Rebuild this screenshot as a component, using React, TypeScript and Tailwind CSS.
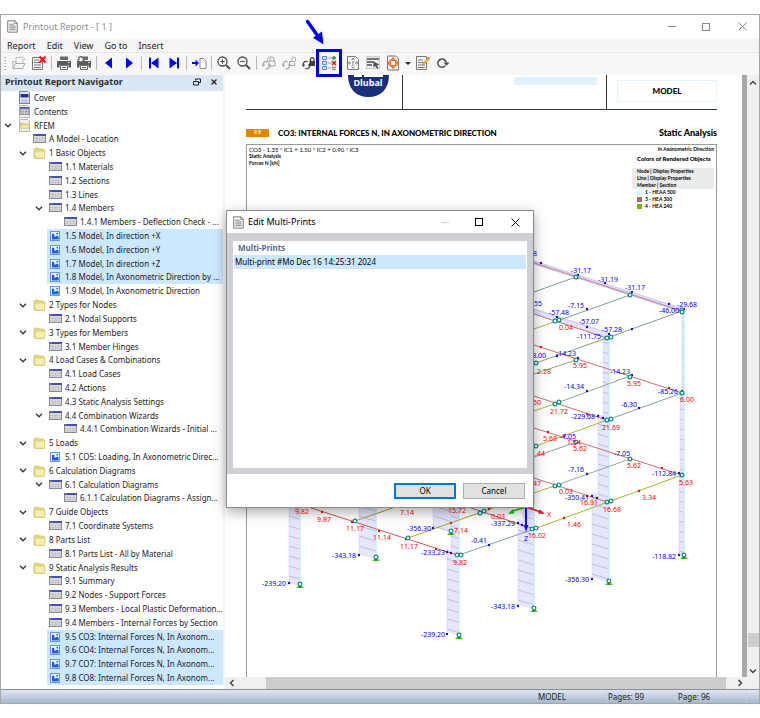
import type { ReactNode } from "react"

type IconKind = "cover" | "contents" | "root" | "folder" | "table" | "picture"

type TreeItem = {
  label: string
  depth: 0 | 1 | 2 | 3
  icon: IconKind
  open?: boolean
  selected?: boolean
}

const tree: TreeItem[] = [
  { label: "Cover", depth: 0, icon: "cover" },
  { label: "Contents", depth: 0, icon: "contents" },
  { label: "RFEM", depth: 0, icon: "root", open: true },
  { label: "A Model - Location", depth: 1, icon: "table" },
  { label: "1 Basic Objects", depth: 1, icon: "folder", open: true },
  { label: "1.1 Materials", depth: 2, icon: "table" },
  { label: "1.2 Sections", depth: 2, icon: "table" },
  { label: "1.3 Lines", depth: 2, icon: "table" },
  { label: "1.4 Members", depth: 2, icon: "table", open: true },
  { label: "1.4.1 Members - Deflection Check - ...", depth: 3, icon: "table" },
  { label: "1.5 Model, In direction +X", depth: 2, icon: "picture", selected: true },
  { label: "1.6 Model, In direction +Y", depth: 2, icon: "picture", selected: true },
  { label: "1.7 Model, In direction +Z", depth: 2, icon: "picture", selected: true },
  { label: "1.8 Model, In Axonometric Direction by ...", depth: 2, icon: "picture", selected: true },
  { label: "1.9 Model, In Axonometric Direction", depth: 2, icon: "picture" },
  { label: "2 Types for Nodes", depth: 1, icon: "folder", open: true },
  { label: "2.1 Nodal Supports", depth: 2, icon: "table" },
  { label: "3 Types for Members", depth: 1, icon: "folder", open: true },
  { label: "3.1 Member Hinges", depth: 2, icon: "table" },
  { label: "4 Load Cases & Combinations", depth: 1, icon: "folder", open: true },
  { label: "4.1 Load Cases", depth: 2, icon: "table" },
  { label: "4.2 Actions", depth: 2, icon: "table" },
  { label: "4.3 Static Analysis Settings", depth: 2, icon: "table" },
  { label: "4.4 Combination Wizards", depth: 2, icon: "table", open: true },
  { label: "4.4.1 Combination Wizards - Initial ...", depth: 3, icon: "table" },
  { label: "5 Loads", depth: 1, icon: "folder", open: true },
  { label: "5.1 CO5: Loading, In Axonometric Direc...", depth: 2, icon: "picture" },
  { label: "6 Calculation Diagrams", depth: 1, icon: "folder", open: true },
  { label: "6.1 Calculation Diagrams", depth: 2, icon: "table", open: true },
  { label: "6.1.1 Calculation Diagrams - Assign...", depth: 3, icon: "table" },
  { label: "7 Guide Objects", depth: 1, icon: "folder", open: true },
  { label: "7.1 Coordinate Systems", depth: 2, icon: "table" },
  { label: "8 Parts List", depth: 1, icon: "folder", open: true },
  { label: "8.1 Parts List - All by Material", depth: 2, icon: "table" },
  { label: "9 Static Analysis Results", depth: 1, icon: "folder", open: true },
  { label: "9.1 Summary", depth: 2, icon: "table" },
  { label: "9.2 Nodes - Support Forces", depth: 2, icon: "table" },
  { label: "9.3 Members - Local Plastic Deformation...", depth: 2, icon: "table" },
  { label: "9.4 Members - Internal Forces by Section", depth: 2, icon: "table" },
  { label: "9.5 CO3: Internal Forces N, In Axonom...", depth: 2, icon: "picture", selected: true },
  { label: "9.6 CO4: Internal Forces N, In Axonom...", depth: 2, icon: "picture", selected: true },
  { label: "9.7 CO7: Internal Forces N, In Axonom...", depth: 2, icon: "picture", selected: true },
  { label: "9.8 CO8: Internal Forces N, In Axonom...", depth: 2, icon: "picture", selected: true },
]

const indent = ["pl-[1px]", "pl-4", "pl-8", "pl-[47px]"]

const TreeIcon = ({ kind }: { kind: IconKind }) => {
  if (kind === "table") {
    return (
      <svg className="h-[12px] w-[13px] shrink-0" viewBox="0 0 13 12">
        <rect x="0.5" y="1.5" width="12" height="8" fill="#dadada" stroke="#8a8a8a" />
        <path d="M1 5.500h11M1 7.500h11M3.500 4v5M6.500 4v5M9.500 4v5" stroke="#c2c2c2" strokeWidth="0.700" />
        <rect x="0" y="1" width="13" height="2" fill="#4450b8" />
        <rect x="0" y="1" width="3" height="2" fill="#666a80" />
      </svg>
    )
  }
  if (kind === "folder") {
    return (
      <svg className="h-[12px] w-[13px] shrink-0" viewBox="0 0 13 12">
        <path d="M1 10.500V2l1-1h3.500l1 1h4l.5 1 1 .5-.6 8H1.500z" fill="#e3d57c" stroke="#d3c673" strokeWidth="0.800" />
        <path d="M2.200 4.200h9.300v6.800H2.200z" fill="#f7eeb0" stroke="#dccf80" strokeWidth="0.600" />
      </svg>
    )
  }
  if (kind === "picture") {
    return (
      <svg className="h-[12px] w-[13px] shrink-0" viewBox="0 0 13 12">
        <rect x="1.500" y="1.500" width="9" height="9" fill="#f3f8ff" stroke="#5f95ea" />
        <path d="M3 9.500V3.800h2.300v2.600h1.500l1.200-1 1.700 1.400v2.700z" fill="#1f5fd6" />
        <circle cx="8.300" cy="3.700" r="0.900" fill="#1f5fd6" />
      </svg>
    )
  }
  return (
    <svg className="h-[13px] w-[13px] shrink-0" viewBox="0 0 13 13">
      <path d="M1.500.5h8.500l1.500 1.500v10.500h-10z" fill="#f0f0f0" stroke="#b5b5b5" />
      {kind === "cover" && (
        <>
          <path d="M1.500.5h8.500l1.500 1.500v10.500h-10z" fill="#e8ecf6" stroke="#7b8190" />
          <rect x="2.500" y="3" width="8" height="3.500" fill="#23349a" />
          <path d="M3 9h7M3 11h7" stroke="#8d94a6" strokeWidth="0.800" />
        </>
      )}
      {kind === "contents" && (
        <>
          <rect x="2" y="2.500" width="9" height="7" fill="#c9c9c9" stroke="#777777" strokeWidth="0.700" />
          <rect x="2" y="2" width="9" height="1.800" fill="#4a55a5" />
          <path d="M2 6.500h9M5 4v5M8 4v5" stroke="#999999" strokeWidth="0.500" />
        </>
      )}
      {kind === "root" && (
        <>
          <path d="M2.500 9V4h3l1 1h4.500v4z" fill="#e3d57c" stroke="#c9ba63" strokeWidth="0.600" />
          <path d="M2 9l1.500-3.200h8.300L10.800 9z" fill="#f7eeb0" stroke="#c9ba63" strokeWidth="0.600" />
        </>
      )}
    </svg>
  )
}

const TreeRow = ({ item }: { item: TreeItem }) => {
  return (
    <li role="treeitem" aria-selected={!!item.selected} className={`flex flex-1 items-stretch ${indent[item.depth]}`}>
      <span className="mr-0.5 flex w-3 shrink-0 items-center justify-center">
        {item.open && (
          <svg className="h-[5px] w-[8px]" viewBox="0 0 8 5">
            <path d="M1 .8l3 3 3-3" fill="none" stroke="#333333" strokeWidth="1.300" />
          </svg>
        )}
      </span>
      <span className={`flex min-w-0 flex-1 items-center gap-[3px] pl-0.5 ${item.selected ? "bg-[#cce8ff]" : ""}`}>
        <TreeIcon kind={item.icon} />
        <span className="whitespace-nowrap leading-[12px]">{item.label}</span>
      </span>
    </li>
  )
}

const PageIcon = ({ className }: { className: string }) => (
  <svg className={className} viewBox="0 0 12 14">
    <path d="M.8.8h7.700l2.700 2.700v9.700H.8z" fill="#fafafa" stroke="#6f6f6f" />
    <path d="M8.300.8v2.900h2.900" fill="none" stroke="#6f6f6f" strokeWidth="0.800" />
    <path d="M2.500 4.500h5M2.500 6.500h7M2.500 8.500h7M2.500 10.500h7" stroke="#6f6f6f" strokeWidth="0.900" />
  </svg>
)

const ToolButton = ({ label, children }: { label: string; children: ReactNode }) => (
  <button type="button" aria-label={label} className="flex h-5 w-5 shrink-0 items-center justify-center">
    <svg className="h-4 w-4" viewBox="0 0 16 16" fill="none">
      {children}
    </svg>
  </button>
)

const Divider = () => <span className="mx-0.5 h-3.5 w-px shrink-0 bg-[#b9b9b9]" />

const Printer = () => (
  <>
    <path d="M4 1.500h8V5H4z" fill="#6a6a6a" />
    <path d="M1 6h14v6.500h-2.500V10h-9v2.500H1z" fill="#5c5c5c" />
    <path d="M4.500 10.500h7v4h-7z" fill="#ffffff" stroke="#6a6a6a" />
    <path d="M6 12.500h4" stroke="#5c5c5c" />
    <path d="M12 7.500h1.500" stroke="#eeeeee" />
  </>
)

const Links = ({ color }: { color: string }) => (
  <>
    <path d="M6.500 6.800a3 3 0 0 0-4 4.200M4.500 13.500a3 3 0 0 0 4-4" stroke={color} strokeWidth="1.300" />
    <path d="M.8 9.800l1.900 2.200 1.400-2.500zM10 10.500L8.300 8.300l-1.500 2.500z" fill={color} />
  </>
)

const Toolbar = () => (
  <div role="toolbar" className="flex h-[22px] items-center bg-[#f7f7f7] pb-0.5 pl-[3px]">
    <span className="mr-0.5 flex w-[3px] flex-col gap-[2px]">
      <i className="h-px w-0.5 bg-[#b5b5b5]" />
      <i className="h-px w-0.5 bg-[#b5b5b5]" />
      <i className="h-px w-0.5 bg-[#b5b5b5]" />
      <i className="h-px w-0.5 bg-[#b5b5b5]" />
      <i className="h-px w-0.5 bg-[#b5b5b5]" />
    </span>
    <ToolButton label="Open">
      <path d="M5 7.500V2.500h5l2 2v4" fill="#f7f7f7" stroke="#c0c0c0" />
      <path d="M1.800 13V6.500h2.700l1 1.500" stroke="#b0b0b0" />
      <path d="M2 13.500l2.500-5h9.500l-2.500 5z" fill="#f2f2f2" stroke="#a8a8a8" />
      <path d="M9 2.500c2-1.500 4.500-.5 4.500 2.500" stroke="#c0c0c0" />
    </ToolButton>
    <ToolButton label="Delete report">
      <path d="M1.500 2.500h10v12h-10z" fill="#f5f5f5" stroke="#777777" />
      <path d="M3 5h5M3 7.500h7M3 10h7M3 12.500h7" stroke="#777777" />
      <path d="M8.500 1.500l6 6M14.500 1.500l-6 6" stroke="#ee1111" strokeWidth="2" />
    </ToolButton>
    <Divider />
    <ToolButton label="Print">
      <Printer />
    </ToolButton>
    <ToolButton label="Print settings">
      <Printer />
      <circle cx="5" cy="4.500" r="2.600" fill="#f7f7f7" stroke="#5c5c5c" strokeWidth="1.800" strokeDasharray="1.700 0.600" />
    </ToolButton>
    <Divider />
    <ToolButton label="Previous page">
      <path d="M11 2.500v11L4 8z" fill="#0000ff" />
    </ToolButton>
    <ToolButton label="Next page">
      <path d="M5 2.500v11L12 8z" fill="#0000ff" />
    </ToolButton>
    <Divider />
    <ToolButton label="First page">
      <path d="M3 2.500h2v11H3zM12.500 2.500v11L5 8z" fill="#0000ff" />
    </ToolButton>
    <ToolButton label="Last page">
      <path d="M3.500 2.500v11L11 8zM11 2.500h2v11h-2z" fill="#0000ff" />
    </ToolButton>
    <Divider />
    <ToolButton label="Go to page">
      <path d="M1 7h3.500V4.500L8 8l-3.500 3.500V9H1z" fill="#0000ff" />
      <path d="M9 3.500h3.500l2.500 2.500v7.500H9z" fill="#ffffff" stroke="#8a8a8a" />
    </ToolButton>
    <Divider />
    <ToolButton label="Zoom in">
      <circle cx="6.500" cy="6.500" r="4.500" stroke="#4d4d4d" strokeWidth="1.300" />
      <path d="M4.300 6.500h4.400M6.500 4.300v4.400" stroke="#4d4d4d" strokeWidth="1.100" />
      <path d="M10 10l4 4" stroke="#4d4d4d" strokeWidth="2" />
    </ToolButton>
    <ToolButton label="Zoom out">
      <circle cx="6.500" cy="6.500" r="4.500" stroke="#4d4d4d" strokeWidth="1.300" />
      <path d="M4.300 6.500h4.400" stroke="#4d4d4d" strokeWidth="1.100" />
      <path d="M10 10l4 4" stroke="#4d4d4d" strokeWidth="2" />
    </ToolButton>
    <Divider />
    <ToolButton label="Lock page">
      <Links color="#a2a2a2" />
      <path d="M8 6h6v5H8zM9 6V4a2 2 0 0 1 4 0v2" stroke="#a2a2a2" />
      <path d="M6.500 7V4a3 3 0 0 1 3-2.500" stroke="#b5b5b5" />
    </ToolButton>
    <ToolButton label="Unlock page">
      <Links color="#a2a2a2" />
      <path d="M8.500 6.500h5v4h-5zM11 6V4a1.800 1.800 0 0 1 3.600 0v2" stroke="#a2a2a2" />
    </ToolButton>
    <ToolButton label="Update and lock">
      <Links color="#3d3d3d" />
      <path d="M8.500 6h5.500v5H8.500z" fill="#3d3d3d" />
      <path d="M9.500 6V4a1.800 1.800 0 0 1 3.500 0v2" stroke="#3d3d3d" strokeWidth="1.200" />
    </ToolButton>
    <div className="relative mr-1">
      <ToolButton label="Edit multi-prints">
        <path d="M1.500 1.500h4v3h-4zM1.500 6.500h4v3h-4zM1.500 11.500h4v3h-4z" fill="#d5e5ff" stroke="#4c86e4" />
        <path d="M7 3h4M7 8h4M7 13h4" stroke="#a2a2a2" />
        <path d="M13 1v4M11 3h4" stroke="#189a45" strokeWidth="1.400" />
        <path d="M11 6l4 4M15 6l-4 4" stroke="#ee1111" strokeWidth="1.500" />
        <path d="M11 12.300h4M11 14.300h4" stroke="#777777" />
      </ToolButton>
      <span className="absolute -inset-x-[3px] -inset-y-1 border-[3px] border-[#0000e6]" />
      <svg className="absolute -top-[34px] -left-[14px] h-[27px] w-5" viewBox="0 0 20 27">
        <path d="M2.500 2.500l10 14" stroke="#0000ee" strokeWidth="3.500" strokeLinecap="round" />
        <path d="M18.500 25.500L8 18.800l9-6.300z" fill="#0000ee" />
      </svg>
    </div>
    <ToolButton label="Page setup">
      <path d="M2.500 1.500h8l3 3v10h-11z" fill="#fcfcfc" stroke="#777777" />
      <path d="M8 3v10M4 8h8" stroke="#888888" strokeDasharray="2 1" />
      <path d="M6.500 4.500L8 3l1.500 1.500M6.500 11.500L8 13l1.500-1.500M4.500 6.500L3.500 8l1 1.500M11.500 6.500l1 1.500-1 1.500" stroke="#777777" />
    </ToolButton>
    <ToolButton label="Selection">
      <path d="M1.500 1.500h13v12h-13z" fill="#eeeeee" stroke="#c7c7c7" />
      <path d="M2 4h12M2 7h7M2 10h5" stroke="#4d4d4d" strokeWidth="1.700" />
      <path d="M8.500 6.500l6 3-2.500.8 1.500 2.800-1.500.7-1.500-2.800-2 1.800z" fill="#4d4d4d" />
    </ToolButton>
    <ToolButton label="Zoom to page">
      <path d="M2.500 1h8l3 2.500V15h-11z" fill="#f2f2f2" stroke="#777777" />
      <path d="M8 2l2.500 2.500h-5zM8 14l2.500-2.500h-5zM2 8l2.500-2.500v5zM14 8l-2.500-2.500v5z" fill="#f06a1d" />
      <rect x="5.200" y="5.300" width="5.600" height="5.400" fill="#ffffff" stroke="#f06a1d" strokeWidth="1.400" />
    </ToolButton>
    <button type="button" aria-label="Zoom options" className="flex h-5 w-[9px] items-center justify-center">
      <svg className="h-[3px] w-[6px]" viewBox="0 0 6 3">
        <path d="M0 0h6L3 3z" fill="#222222" />
      </svg>
    </button>
    <ToolButton label="Edit text">
      <path d="M2.500 1.500h10v13h-10z" fill="#f8f8f8" stroke="#777777" />
      <path d="M4 5h5M4 7.500h6M4 10h7M4 12.500h7" stroke="#777777" />
      <path d="M9 8l5-5.500 1.500 1.300-5 5.700-2 .6z" fill="#f0b93a" stroke="#c98a18" strokeWidth="0.600" />
      <path d="M13.500 3l1-1.200 1.500 1.300-1 1.200z" fill="#e06a5a" />
    </ToolButton>
    <ToolButton label="Refresh">
      <path d="M11.300 10.800a4.200 4.200 0 1 1 .9-3.300" stroke="#4d4d4d" strokeWidth="1.500" />
      <path d="M9.500 7.500h6l-3 3.300z" fill="#4d4d4d" />
    </ToolButton>
  </div>
)

type Point = [number, number]

type Column = { left: number; right: number; top: number; bottom: number }

const columns: Column[] = [
  { left: 682, right: 684, top: 311, bottom: 393 },
  { left: 680, right: 684, top: 393, bottom: 475 },
  { left: 679, right: 684, top: 475, bottom: 556 },
  { left: 603, right: 609, top: 336, bottom: 420 },
  { left: 598, right: 609, top: 418, bottom: 502 },
  { left: 592, right: 609, top: 498, bottom: 582 },
  { left: 523, right: 534, top: 440, bottom: 529 },
  { left: 518, right: 534, top: 524, bottom: 609 },
  { left: 451, right: 459, top: 480, bottom: 555 },
  { left: 447, right: 459, top: 553, bottom: 635 },
  { left: 433, right: 451, top: 470, bottom: 532 },
  { left: 359, right: 376, top: 470, bottom: 559 },
  { left: 289, right: 300, top: 470, bottom: 586 },
]

const members: { from: Point; to: Point; color: string }[] = [
  { from: [534, 263], to: [682, 311], color: "#c87f8f" },
  { from: [534, 314], to: [607, 338], color: "#c87f8f" },
  { from: [534, 292], to: [576, 277], color: "#7f9f8f" },
  { from: [534, 329], to: [557, 321], color: "#9fb83c" },
  { from: [557, 321], to: [630, 295], color: "#7f9f8f" },
  { from: [536, 363], to: [607, 338], color: "#7f9f7f" },
  { from: [607, 338], to: [682, 311], color: "#7f9f8f" },
  { from: [534, 374], to: [576, 360], color: "#98a870" },
  { from: [534, 345], to: [682, 393], color: "#c87070" },
  { from: [534, 396], to: [607, 420], color: "#c87070" },
  { from: [534, 411], to: [557, 403], color: "#9fb83c" },
  { from: [557, 403], to: [630, 376], color: "#8fa88f" },
  { from: [536, 446], to: [607, 420], color: "#9fb83c" },
  { from: [607, 420], to: [682, 393], color: "#7f9f9f" },
  { from: [534, 457], to: [576, 442], color: "#7f9f9f" },
  { from: [534, 428], to: [682, 475], color: "#c87070" },
  { from: [534, 478], to: [607, 502], color: "#c87070" },
  { from: [534, 493], to: [557, 485], color: "#9fb83c" },
  { from: [557, 485], to: [630, 459], color: "#8fa8a0" },
  { from: [459, 555], to: [534, 529], color: "#7f9f9f" },
  { from: [534, 529], to: [682, 475], color: "#a3b52a" },
  { from: [302, 505], to: [457, 555], color: "#c85c5c" },
  { from: [355, 521], to: [404, 504], color: "#a3a52a" },
  { from: [408, 538], to: [504, 504], color: "#a3a52a" },
  { from: [462, 505], to: [534, 529], color: "#c85c5c" },
]

const nodes: Point[] = [
  [576, 277], [630, 295], [682, 310], [682, 312], [555, 321], [559, 320], [607, 338], [611, 337],
  [536, 363], [576, 360], [630, 377], [682, 393], [555, 404], [559, 402], [607, 420], [611, 419],
  [536, 446], [576, 442], [630, 459], [682, 475], [555, 486], [559, 485], [607, 502], [611, 501],
  [532, 529], [536, 528], [480, 513], [484, 511], [355, 521], [408, 538], [457, 555], [461, 555],
]

const supports: Point[] = [
  [300, 584], [376, 557], [451, 531], [459, 635], [534, 608], [609, 581], [684, 555],
]

const blueDots: Point[] = [
  [541, 263], [578, 275], [605, 283], [632, 292], [669, 304], [684, 309], [587, 309], [557, 317],
  [587, 327], [609, 334], [632, 329], [557, 356], [578, 358], [632, 375], [587, 391], [682, 391],
  [639, 408], [598, 416], [603, 418], [587, 474], [592, 496], [597, 498], [489, 545], [518, 523],
  [522, 525], [592, 579], [518, 606], [447, 634], [289, 583], [359, 555], [433, 528], [447, 552],
  [451, 553], [679, 555], [679, 473],
]

const redDots: Point[] = [
  [541, 347], [669, 388], [587, 414], [548, 432], [564, 436], [662, 468], [587, 496], [639, 491],
  [564, 518], [322, 512], [352, 522], [379, 531], [406, 539], [436, 549], [451, 523], [489, 509],
]

type Value = { x: number; y: number; text: string }

const blueValues: Value[] = [
  { x: 527, y: 253, text: "-31.68" },
  { x: 581, y: 270, text: "-31.17" },
  { x: 608, y: 279, text: "-31.19" },
  { x: 635, y: 287, text: "-31.17" },
  { x: 687, y: 304, text: "-29.68" },
  { x: 669, y: 310, text: "-46.00" },
  { x: 532, y: 303, text: "-57.55" },
  { x: 576, y: 305, text: "-7.15" },
  { x: 559, y: 312, text: "-57.48" },
  { x: 589, y: 321, text: "-57.07" },
  { x: 612, y: 329, text: "-57.28" },
  { x: 589, y: 336, text: "-111.75" },
  { x: 538, y: 355, text: "-8.00" },
  { x: 566, y: 353, text: "-14.23" },
  { x: 620, y: 371, text: "-14.23" },
  { x: 574, y: 386, text: "-14.34" },
  { x: 668, y: 391, text: "-85.26" },
  { x: 629, y: 404, text: "-6.30" },
  { x: 583, y: 416, text: "-229.68" },
  { x: 568, y: 436, text: "-7.05" },
  { x: 622, y: 453, text: "-7.05" },
  { x: 576, y: 469, text: "-7.16" },
  { x: 664, y: 473, text: "-112.84" },
  { x: 577, y: 497, text: "-350.41" },
  { x: 664, y: 556, text: "-118.82" },
  { x: 577, y: 579, text: "-356.30" },
  { x: 503, y: 523, text: "-337.29" },
  { x: 479, y: 540, text: "-0.41" },
  { x: 503, y: 606, text: "-343.18" },
  { x: 419, y: 528, text: "-356.30" },
  { x: 433, y: 552, text: "-233.23" },
  { x: 344, y: 555, text: "-343.18" },
  { x: 274, y: 583, text: "-239.20" },
  { x: 433, y: 634, text: "-239.20" },
]

const redValues: Value[] = [
  { x: 566, y: 327, text: "0.04" },
  { x: 580, y: 365, text: "5.95" },
  { x: 634, y: 383, text: "5.95" },
  { x: 544, y: 371, text: "2.28" },
  { x: 687, y: 399, text: "6.00" },
  { x: 534, y: 402, text: "5.50" },
  { x: 559, y: 411, text: "21.72" },
  { x: 611, y: 427, text: "21.69" },
  { x: 550, y: 438, text: "5.68" },
  { x: 574, y: 442, text: "1.54" },
  { x: 580, y: 448, text: "5.62" },
  { x: 538, y: 453, text: "1.44" },
  { x: 634, y: 465, text: "5.62" },
  { x: 686, y: 482, text: "5.63" },
  { x: 534, y: 483, text: "5.47" },
  { x: 566, y: 491, text: "0.03" },
  { x: 589, y: 502, text: "16.91" },
  { x: 612, y: 509, text: "16.68" },
  { x: 649, y: 497, text: "3.34" },
  { x: 574, y: 524, text: "1.46" },
  { x: 537, y: 535, text: "16.02" },
  { x: 498, y: 516, text: "0.03" },
  { x: 302, y: 511, text: "9.82" },
  { x: 324, y: 519, text: "9.87" },
  { x: 355, y: 528, text: "11.17" },
  { x: 382, y: 537, text: "11.14" },
  { x: 409, y: 546, text: "11.17" },
  { x: 407, y: 512, text: "7.14" },
  { x: 457, y: 510, text: "15.72" },
  { x: 461, y: 530, text: "7.14" },
  { x: 460, y: 562, text: "9.82" },
]

const hatchLines = ({ left, right, top, bottom }: Column) => {
  const slant = (right - left) * 0.3
  const lines: string[] = []
  for (let y = top + 6; y < bottom - slant; y += 10) {
    lines.push(`M${left} ${y}L${right} ${y + slant}`)
  }
  return lines.join("")
}

const ForcesDiagram = () => (
  <svg className="absolute top-0 left-0 h-[532px] w-[469px] font-['Noto_Sans',sans-serif] font-normal" viewBox="247 145 469 532">
    {columns.map((c) => {
      const slant = (c.right - c.left) * 0.3
      return (
        <g key={`${c.left}-${c.top}`}>
          <path
            d={`M${c.left} ${c.top - slant}L${c.right} ${c.top}V${c.bottom}L${c.left} ${c.bottom - slant}z`}
            fill="#e5e5fc"
            stroke="#d3d3f2"
            strokeWidth="0.500"
          />
          <path d={hatchLines(c)} stroke="#b4b4de" strokeWidth="0.800" />
          <path d={`M${c.right} ${c.top}V${c.bottom}`} stroke="#bdf3f6" strokeWidth="1.200" />
        </g>
      )
    })}
    <path d="M534 261L684 309L682 312L534 264z" fill="#dcdcf8" stroke="#b5aedc" strokeWidth="0.600" />
    <path d="M534 309L609 333L607 338L534 314z" fill="#e3e3fb" stroke="#b5aedc" strokeWidth="0.600" />
    {members.map((m) => (
      <path
        key={`${m.from}-${m.to}`}
        d={`M${m.from[0]} ${m.from[1]}L${m.to[0]} ${m.to[1]}`}
        stroke={m.color}
        strokeWidth="1"
      />
    ))}
    {blueDots.map(([x, y]) => (
      <circle key={`${x}-${y}`} cx={x} cy={y} r="1.200" fill="#1010c8" />
    ))}
    {redDots.map(([x, y]) => (
      <circle key={`${x}-${y}`} cx={x} cy={y} r="1.200" fill="#e01010" />
    ))}
    {supports.map(([x, y]) => (
      <g key={`${x}-${y}`}>
        <path d={`M${x - 4} ${y + 4}L${x - 2} ${y + 2}H${x + 2}L${x + 4} ${y + 4}z`} fill="#27d427" />
        <circle cx={x} cy={y + 3} r="0.900" fill="#a83a10" />
        <circle cx={x} cy={y} r="1.900" fill="#ffffff" stroke="#0f8a84" strokeWidth="1.200" />
      </g>
    ))}
    {nodes.map(([x, y]) => (
      <circle key={`${x}-${y}`} cx={x} cy={y} r="1.900" fill="#e6fafa" stroke="#0f8a84" strokeWidth="1.200" />
    ))}
    <g strokeWidth="1.500">
      <path d="M526 507L541 512" stroke="#ee1111" />
      <path d="M545 514l-7-.5 2-4z" fill="#ee1111" />
      <path d="M526 507L513 511" stroke="#11cc11" />
      <path d="M508 514l5-5 1.500 4.500z" fill="#11cc11" />
      <path d="M526 505V526" stroke="#1111dd" strokeWidth="2" />
      <path d="M526 532l-2.500-7h5z" fill="#1111dd" />
    </g>
    <g fontSize="7" textAnchor="middle" dominantBaseline="central">
      <g fill="#0000ff">
        {blueValues.map((v) => (
          <text key={`${v.x}-${v.y}`} x={v.x} y={v.y}>
            {v.text}
          </text>
        ))}
        <text x="526" y="538">Z</text>
      </g>
      <g fill="#ff0000">
        {redValues.map((v) => (
          <text key={`${v.x}-${v.y}`} x={v.x} y={v.y}>
            {v.text}
          </text>
        ))}
        <text x="549" y="514">X</text>
      </g>
    </g>
  </svg>
)

const legend = [
  { label: "1 - HEAA 500", color: "bg-[#ccffff]" },
  { label: "3 - HEA 300", color: "bg-[#b86464]" },
  { label: "4 - HEA 240", color: "bg-[#73b400]" },
]

const ReportPage = () => (
  <article className="flex min-w-0 flex-1 flex-col overflow-hidden bg-white pr-[25px] pl-[21px] font-['Lato',sans-serif] text-black">
    <header className="flex h-[35px] shrink-0 border-b border-[#333333]">
      <div className="w-[157px] shrink-0 border-r border-[#333333]">
        <svg className="ml-[102px] h-[22px] w-[41px]" viewBox="0 0 41 22">
          <path d="M0 0h41c0 14-8 22-20.500 22S0 14 0 0z" fill="#1a2f7d" />
          <path d="M6 0h29v2H6z" fill="#ffffff" />
          <path d="M14 0h2v2h-2z" fill="#1a2f7d" />
          <text x="20" y="11" fontSize="9" fontWeight="700" fill="#ffffff" textAnchor="middle" className="font-['Open_Sans',sans-serif]">
            Dlubal
          </text>
        </svg>
      </div>
      <div className="flex-1 border-r border-[#333333] pt-0.5 pr-[9px]">
        <div className="ml-auto h-2 w-[83px] bg-[#e0f2ff]" />
      </div>
      <div className="w-[110px] shrink-0 pt-[5px] pl-2.5">
        <div className="flex h-[22px] items-center justify-center border border-[#e3f2fb] text-[8px] font-black">MODEL</div>
      </div>
    </header>
    <div className="mt-[17px] flex h-3 shrink-0 items-center font-black">
      <span className="mr-[9px] flex h-2 w-[23px] items-center justify-center bg-[#e08700] text-[5px] text-white">9.5</span>
      <h2 className="flex-1 whitespace-nowrap text-[8px]">CO3: INTERNAL FORCES N, IN AXONOMETRIC DIRECTION</h2>
      <span className="whitespace-nowrap text-[9px]">Static Analysis</span>
    </div>
    <div className="relative mt-[5px] flex flex-1 items-start justify-between border border-b-0 border-[#9a9a9a] text-[5px] leading-[7px] font-bold">
      <ForcesDiagram />
      <div className="pt-px pl-0.5">
        <p className="text-[6px] font-normal">CO3 - 1.35 * lC1 + 1.50 * lC2 + 0.90 * lC3</p>
        <p>Static Analysis</p>
        <p>Forces N [kN]</p>
      </div>
      <div className="w-[84px] pt-px pr-0.5">
        <p className="text-right">In Axonometric Direction</p>
        <p className="mt-0.5 pl-[5px] text-[6px] font-black">Colors of Rendered Objects</p>
        <div className="mt-1.5 bg-[#ebebeb] pl-[5px]">
          <p>Node | Display Properties</p>
          <p>Line | Display Properties</p>
          <p>Member | Section</p>
        </div>
        <ul className="pl-[5px]">
          {legend.map((entry) => (
            <li key={entry.label} className="flex items-center gap-[3px]">
              <i className={`h-[5px] w-[5px] ${entry.color}`} />
              {entry.label}
            </li>
          ))}
        </ul>
      </div>
    </div>
  </article>
)

const Arrow = ({ d }: { d: string }) => (
  <svg className="h-2 w-2" viewBox="0 0 8 8">
    <path d={d} fill="none" stroke="#444444" strokeWidth="1.500" />
  </svg>
)

const EditMultiPrints = () => (
  <section
    role="dialog"
    aria-labelledby="dialog-title"
    className="absolute top-[210px] left-[226px] flex w-[308px] flex-col border border-[#8a8a8a] bg-white shadow-[0_4px_12px_rgba(0,0,0,0.35)]"
  >
    <header className="flex h-[22px] items-center pr-[13px] pl-1.5">
      <PageIcon className="h-[13px] w-[11px]" />
      <h2 id="dialog-title" className="ml-1 flex-1 text-[9px] text-black">Edit Multi-Prints</h2>
      <span className="h-px w-2 bg-[#cccccc]" />
      <button type="button" aria-label="Maximize" className="ml-[26px] h-2 w-2 border border-black" />
      <button type="button" aria-label="Close" className="ml-7">
        <svg className="h-[9px] w-[9px]" viewBox="0 0 9 9">
          <path d="M.5.5l8 8M8.500.5l-8 8" stroke="#111111" />
        </svg>
      </button>
    </header>
    <div className="bg-[#cfcfd6] px-1.5 pt-2 pb-1.5">
      <div className="h-[227px] bg-white px-px pt-px text-[8px]">
        <h3 className="flex h-[13px] items-center pb-0.5 pl-1 font-bold text-[#56698f]">Multi-Prints</h3>
        <ul>
          <li className="flex h-3.5 items-center bg-[#cce8ff] pl-px text-black">Multi-print #Mo Dec 16 14:25:31 2024</li>
        </ul>
      </div>
    </div>
    <footer className="flex justify-end gap-[7px] pt-[9px] pr-2 pb-2 text-[8px] text-black">
      <button type="button" className="h-4 w-[62px] border-2 border-[#0078d7] bg-[#e1e1e1] leading-[10px]">OK</button>
      <button type="button" className="h-4 w-[62px] border border-[#adadad] bg-[#e1e1e1] leading-[10px]">Cancel</button>
    </footer>
  </section>
)

const App = () => {
  return (
    <div className="flex min-h-screen flex-col bg-white py-3.5 font-['Noto_Sans',sans-serif] text-[#1a1a1a]">
      <div className="flex flex-1 flex-col border border-[#a6a6a6]">
        <header className="flex h-[23px] shrink-0 items-center pr-3 pl-1.5">
          <PageIcon className="h-[13px] w-[11px]" />
          <h1 className="ml-[5px] flex-1 text-[9px] text-[#8c8c8c]">Printout Report - [ 1 ]</h1>
          <button type="button" aria-label="Minimize" className="h-px w-2 bg-[#888888]" />
          <button type="button" aria-label="Maximize" className="ml-[26px] h-2 w-2 border border-[#888888]" />
          <button type="button" aria-label="Close" className="ml-7">
            <svg className="h-[9px] w-[9px]" viewBox="0 0 9 9">
              <path d="M.5.5l8 8M8.500.5l-8 8" stroke="#888888" />
            </svg>
          </button>
        </header>
        <nav className="flex h-[15px] shrink-0 items-center gap-[11px] border-b border-[#e6e6e6] bg-[#f5f5f5] pl-1.5 text-[9px] leading-[13px]">
          <button type="button">Report</button>
          <button type="button">Edit</button>
          <button type="button">View</button>
          <button type="button">Go to</button>
          <button type="button">Insert</button>
        </nav>
        <Toolbar />
        <div className="flex flex-1">
          <aside className="flex w-[222px] shrink-0 flex-col bg-white">
            <div className="flex h-4 shrink-0 items-center bg-[#d9e6f3] pr-1.5 pb-0.5 pl-1">
              <h2 className="flex-1 text-[9px] leading-[14px] font-bold text-[#26303c]">Printout Report Navigator</h2>
              <button type="button" aria-label="Float">
                <svg className="h-[8px] w-[8px]" viewBox="0 0 8 8">
                  <path d="M2.500 2.500v-1.500h5v3.500H6M.5 3.500h5v3.500h-5z" fill="none" stroke="#222222" />
                </svg>
              </button>
              <button type="button" aria-label="Close navigator" className="ml-2.5">
                <svg className="h-[6px] w-[6px]" viewBox="0 0 6 6">
                  <path d="M.5.5l5 5M5.500.5l-5 5" stroke="#222222" strokeWidth="1.300" />
                </svg>
              </button>
            </div>
            <ul role="tree" className="flex flex-1 flex-col pb-1 text-[8px]">
              {tree.map((item) => (
                <TreeRow key={item.label} item={item} />
              ))}
            </ul>
          </aside>
          <main className="flex min-w-0 flex-1 flex-col border-l-2 border-[#f5f5f5]">
            <div className="flex flex-1">
              <ReportPage />
              <div className="w-[5px] shrink-0 bg-[#a9a9a9]" />
              <div className="flex w-3 shrink-0 flex-col items-center bg-[#f0f0f0] pt-1 pb-0.5">
                <Arrow d="M1 5.500l3-3 3 3" />
                <span className="mt-auto mb-5 h-3.5 w-[11px] bg-[#cdcdcd]" />
                <Arrow d="M1 2.500l3 3 3-3" />
              </div>
            </div>
            <div className="flex h-3 shrink-0 items-center bg-[#f0f0f0] pr-[15px] pl-[3px]">
              <Arrow d="M5.500 1l-3 3 3 3" />
              <span className="mr-2.5 ml-[30px] h-full flex-1 bg-[#cdcdcd]" />
              <Arrow d="M2.500 1l3 3-3 3" />
            </div>
          </main>
        </div>
        <footer className="flex h-3.5 shrink-0 items-center justify-end border-t border-[#8a8f96] bg-linear-to-b from-[#dfe8f3] to-[#a6b7cf] text-[8px] leading-[12px]">
          <span className="w-[68px]">MODEL</span>
          <span className="w-[70px] border-l border-[#c3cfdf] pl-px">Pages: 99</span>
          <span className="w-[70px] border-l border-[#c3cfdf] pl-px">Page: 96</span>
          <span className="h-3 w-[13px] border-l border-[#c3cfdf]" />
        </footer>
      </div>
      <EditMultiPrints />
    </div>
  )
}

export default App
